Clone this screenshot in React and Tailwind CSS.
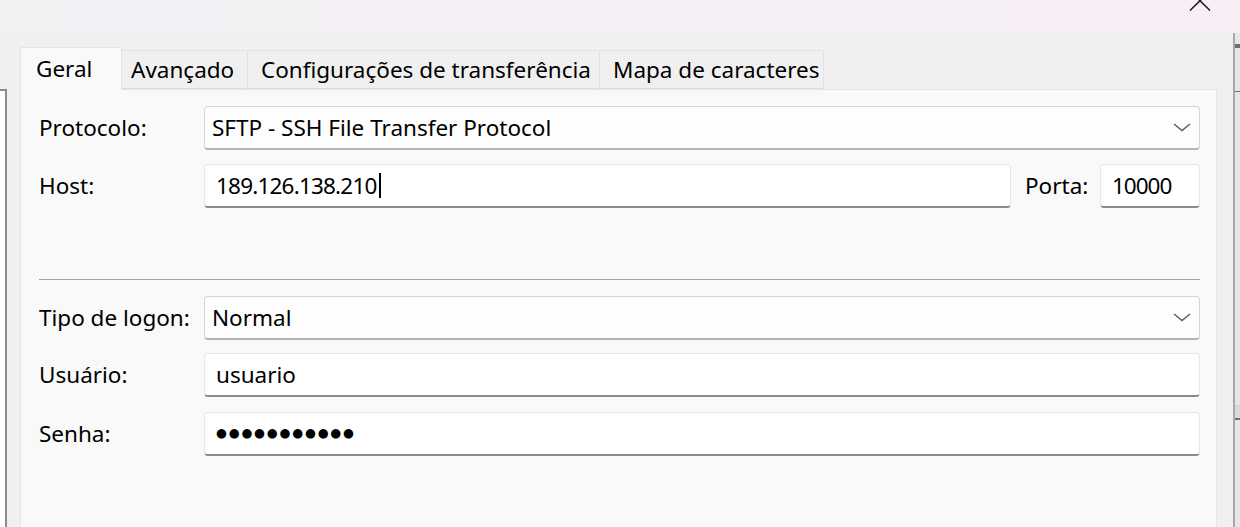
import React from 'react';

const TABS = [
  { label: 'Avançado', w: 'w-[126px]', pl: 'pl-[9px]' },
  { label: 'Configurações de transferência', w: 'w-[352px]', pl: 'pl-[13px]' },
  { label: 'Mapa de caracteres', w: 'w-[224px]', pl: 'pl-[13px]' },
];

function Chevron() {
  return (
    <svg width="18" height="9" viewBox="0 0 18 9" className="shrink-0">
      <polyline points="1,1 9,7.5 17,1" fill="none" stroke="#606060" strokeWidth="1.6" />
    </svg>
  );
}

function Select({ value }) {
  return (
    <div className="flex-1 h-[44px] flex items-center justify-between pl-[7px] pr-[8px] bg-[#fdfdfd] border border-[#d6d6d6] border-b-[#b4b4b4] border-b-2 rounded-[4px]">
      <span>{value}</span>
      <Chevron />
    </div>
  );
}

function TextBox({ children, className = 'flex-1' }) {
  return (
    <div className={`${className} h-[44px] flex items-center pl-[11px] bg-white border border-[#e6e6e6] border-b-2 border-b-[#8a8a8a] rounded-[4px]`}>
      {children}
    </div>
  );
}

function Row({ label, children, className = '' }) {
  return (
    <div className={`flex items-center h-[44px] ${className}`}>
      <span className="w-[165px] shrink-0">{label}</span>
      {children}
    </div>
  );
}

export default function App() {
  return (
    <div
      className="w-[1240px] h-[527px] overflow-hidden bg-[#f0f0f0] flex flex-col text-[22.5px] text-black"
      style={{ fontFamily: '"Noto Sans", "Open Sans", sans-serif' }}
    >
      {/* Title strip */}
      <div className="relative h-[33px] shrink-0 bg-gradient-to-r from-[#f3f2f5] to-[#f8eef6]">
        <svg width="22" height="11" viewBox="0 0 22 11" className="absolute left-[1189px] top-0">
          <line x1="1" y1="10.5" x2="22" y2="-10" stroke="#1a1a1a" strokeWidth="1.5" />
          <line x1="0" y1="-10" x2="21" y2="10.5" stroke="#1a1a1a" strokeWidth="1.5" />
        </svg>
      </div>

      <div className="flex-1 flex">
        {/* Left neighbour pane */}
        <div className="w-[7px] shrink-0 pt-[56px] flex flex-col">
          <div className="flex-1 bg-white border-t-2 border-r-2 border-[#8b8b95]" />
        </div>
        <div className="w-[13px] shrink-0" />

        {/* Tab control */}
        <div className="w-[1197px] shrink-0 flex flex-col pt-[13px]">
          <div className="flex items-end h-[43px]">
            <div className="w-[102px] h-[43px] flex items-center pl-[15px] bg-[#f9f9f9] border border-b-0 border-[#e5e5e5] relative z-10 -mb-px pb-px">
              Geral
            </div>
            {TABS.map((t) => (
              <div
                key={t.label}
                className={`${t.w} ${t.pl} h-[39px] flex items-center bg-[#f0f0f0] border border-l-0 border-[#e3e3e3] border-b-[#dcdcdc] whitespace-nowrap`}
              >
                {t.label}
              </div>
            ))}
          </div>

          <div className="flex-1 bg-[#f9f9f9] border border-b-0 border-[#e5e5e5] pl-[18px] pr-[16px] pt-[16px]">
            <Row label="Protocolo:">
              <Select value="SFTP - SSH File Transfer Protocol" />
            </Row>
            <Row label="Host:" className="mt-[14px]">
              <TextBox>
                <span className="tracking-[-0.8px]">189.126.138.210</span>
                <span className="inline-block w-[2px] h-[25px] bg-black ml-[2px]" />
              </TextBox>
              <span className="ml-[14px] w-[75px]">Porta:</span>
              <TextBox className="w-[100px]">
                <span className="tracking-[-1px]">10000</span>
              </TextBox>
            </Row>

            <div className="mt-[71px] h-px bg-[#a0a0a0]" />

            <Row label="Tipo de logon:" className="mt-[16px]">
              <Select value="Normal" />
            </Row>
            <Row label="Usuário:" className="mt-[13px]">
              <TextBox>usuario</TextBox>
            </Row>
            <Row label="Senha:" className="mt-[15px]">
              <TextBox>
                <span className="text-[12.5px] tracking-[1.8px]" style={{ fontFamily: '"DejaVu Sans", sans-serif' }}>
                  ●●●●●●●●●●●
                </span>
              </TextBox>
            </Row>
          </div>
        </div>

        <div className="w-[16px] shrink-0" />

        {/* Splitter / scrollbar edge */}
        <div className="w-[2px] shrink-0 bg-[#a8a8a8]" />
        <div className="flex-1 flex flex-col bg-[#e6e6e6]">
          <div className="h-[11px]" />
          <div className="h-[4px] bg-[#6e6e6e]" />
          <div className="h-[43px]" />
          <div className="h-px bg-[#707070]" />
          <div className="h-[313px]" />
          <div className="h-px bg-[#d4d4d4]" />
          <div className="h-[12px] bg-[#dadada]" />
          <div className="h-[2px] bg-[#6e6e6e]" />
        </div>
      </div>
    </div>
  );
}
